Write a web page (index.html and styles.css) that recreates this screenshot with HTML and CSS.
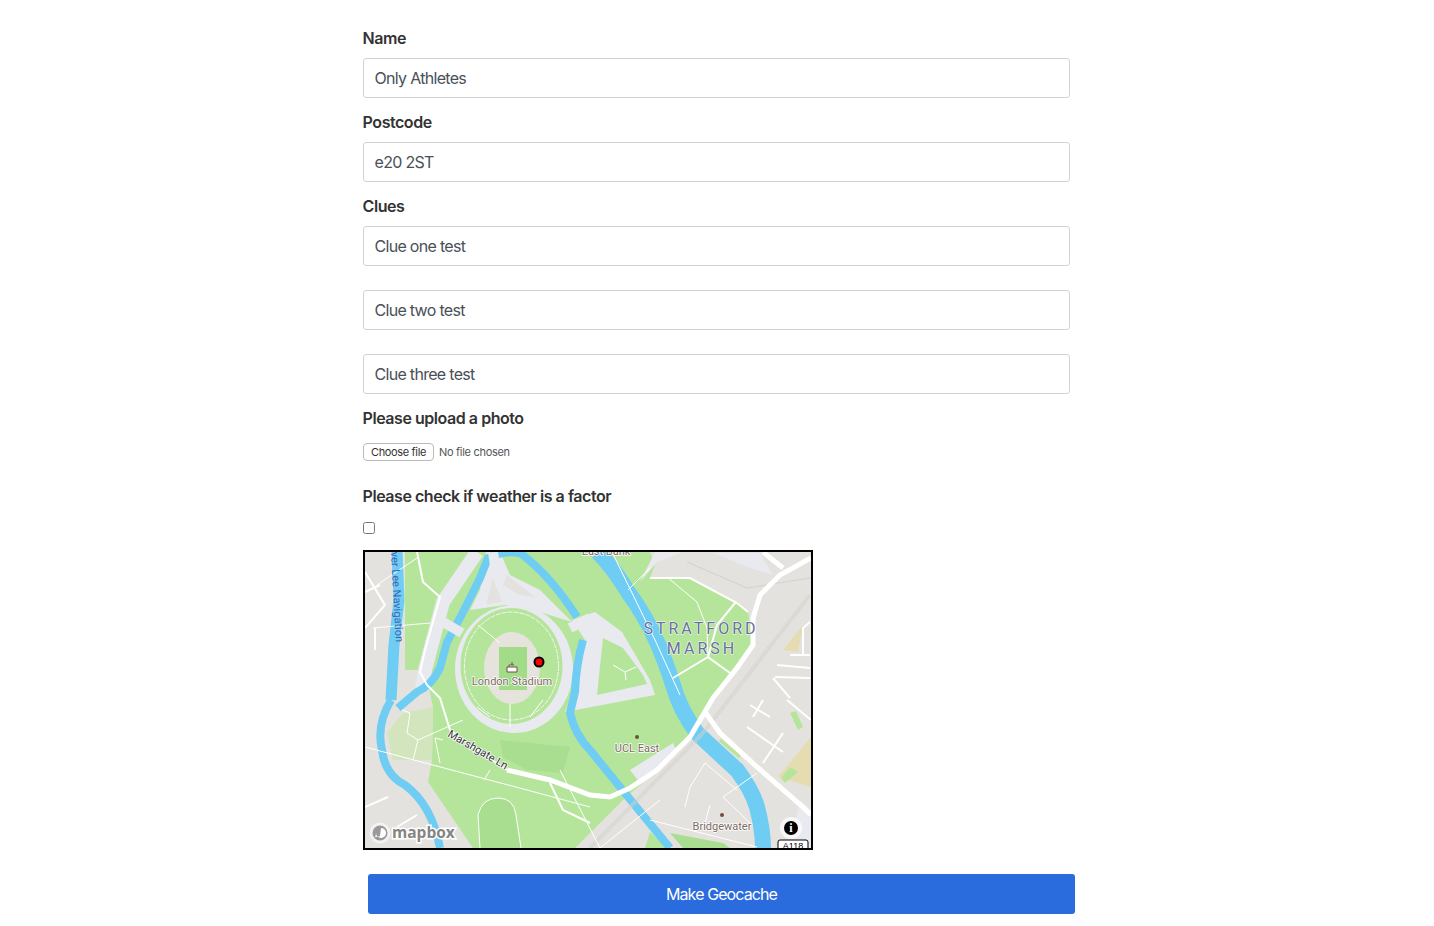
FILE: index.html
```html
<!DOCTYPE html>
<html lang="en">
<head>
  <meta charset="UTF-8">
  <title>Make Geocache</title>
  <link rel="stylesheet" href="styles.css">
</head>
<body>
  <form class="geocache-form">
    <div class="form-group">
      <label class="form-label">Name</label>
      <input class="form-input" type="text" value="Only Athletes">
    </div>
    <div class="form-group">
      <label class="form-label">Postcode</label>
      <input class="form-input" type="text" value="e20 2ST">
    </div>
    <div class="form-group clues">
      <label class="form-label">Clues</label>
      <input class="form-input" type="text" value="Clue one test">
      <input class="form-input" type="text" value="Clue two test">
      <input class="form-input" type="text" value="Clue three test">
    </div>
    <div class="form-group upload">
      <label class="form-label">Please upload a photo</label>
      <div class="file-row">
        <button class="file-btn" type="button">Choose file</button>
        <span class="file-name">No file chosen</span>
      </div>
    </div>
    <div class="form-group weather">
      <label class="form-label">Please check if weather is a factor</label>
      <input class="form-check" type="checkbox">
    </div>

    <div class="map">
      <svg class="map-svg" viewBox="365 552 446 296" width="446" height="296">
        <rect class="land" x="365" y="552" width="446" height="296"/>

        <!-- parks -->
        <polygon class="park" points="405,552 650,552 655,565 650,578 690,578 737,603 748,612 753,645 730,672 710,700 690,737 657,770 623,800 590,833 575,848 473,848 428,782 432,760 433,707 425,670 405,670"/>
        <polygon class="park-pale" points="387,733 403,713 433,707 432,760 393,760"/>
        <polygon class="park-dark" points="500,740 570,747 563,773 527,770 503,757"/>
        <path class="track" d="M480,848 L478,815 Q482,798 498,798 Q514,798 516,815 L521,848"/>
        <polygon class="park-dark" points="670,833 723,843 730,848 683,848"/>
        <polygon class="park" points="650,832 667,848 645,848"/>
        <polygon class="park" points="790,713 796,711 803,727 798,730"/>
        <polygon class="sand" points="803,625 783,650 798,652"/>
        <polygon class="sand" points="811,737 778,777 811,787"/>
        <polygon class="park" points="790,767 798,772 785,783 781,778"/>
        <path class="park-strip" d="M720,740 L740,757"/>

        <!-- plazas -->
        <polygon class="plaza" points="713,553 760,553 773,575 750,568"/>
        <polygon class="plaza" points="657,562 683,552 655,552 640,582"/>
        <polygon class="plaza" points="630,770 673,743 677,753 640,783"/>
        <polygon class="plaza" points="800,800 811,810 811,848 790,848"/>
        <ellipse class="plaza" cx="514" cy="669" rx="59" ry="64"/>
        <path class="plaza-road" d="M477,552 L443,602 L425,670 L422,690"/>
        <polygon class="plaza" points="486,552 500,552 510,575 540,590 572,622 540,612 505,605 470,610 480,590"/>
        <polygon class="land" points="493,578 502,602 486,604"/>
        <polygon class="land" points="507,575 535,597 520,595 503,585"/>
        <polygon class="plaza" points="572,620 595,612 622,632 650,680 655,695 565,712 578,680 585,640"/>
        <polygon class="park" points="603,638 623,648 643,675 647,684 597,695"/>

        <!-- stadium -->
        <ellipse class="park" cx="511.5" cy="666" rx="51" ry="58"/>
        <ellipse class="stadium-ring" cx="511.5" cy="666" rx="47" ry="54"/>
        <ellipse class="stadium-floor" cx="512" cy="668" rx="28" ry="36"/>
        <polygon class="pitch" points="499,647 527,647 527,690 499,690"/>
        <path class="road-thin" d="M478,625 L500,643 M477,707 L490,717 M510,704 L510,727 M543,700 L530,717"/>

        <!-- water -->
        <path class="water-lee" d="M397,552 L399,600 L394,645 L391,700"/>
        <path class="water" d="M391,700 Q376,725 382,750 Q385,775 405,785 Q432,805 440,848"/>
        <path class="water" d="M398,708 L417,692 Q432,685 440,668 L447,642 L460,618 L480,578 L488,558 Q505,550 520,553 Q550,575 577,617"/>
        <path class="water" d="M583,640 Q576,665 575,692 L570,713 Q575,735 590,750 L633,803 L670,848"/>
        <path class="water-main" d="M598,552 Q615,570 628,592 Q645,615 657,642 Q667,665 673,685 Q680,710 697,733 Q715,750 737,770 Q752,790 757,807 Q763,830 763,848"/>

        <!-- bridges -->
        <path class="bridge" d="M493,552 L496,572"/>
        <path class="bridge" d="M443,622 L462,633"/>
        <path class="bridge" d="M570,628 L590,618"/>

        <!-- rail -->
        <path class="rail" d="M590,848 L703,733 L810,595"/>
        <path class="rail-thin" d="M687,562 L747,588 L810,578"/>

        <!-- big roads -->
        <path class="road-wide" d="M811,558 L780,575 L760,595 L753,618 L753,645 L737,668 L713,698 L690,737 L657,770 L630,788 L610,797 L590,795 L550,780 L507,770"/>
        <path class="road-wide" d="M763,552 L783,568"/>
        <path class="road-wide" d="M705,712 L720,733 L757,767 L803,807 L811,815"/>
        <path class="road" d="M650,578 L690,578 L737,603 L748,612 M735,603 L717,625 L708,657 L730,673 M673,678 L708,657"/>
        <path class="road" d="M417,552 L423,582 L440,597 L425,650 L420,672 L427,685 L440,698 L450,730"/>
        <path class="road" d="M507,770 L480,752 L450,730"/>
        <path class="road" d="M550,783 L563,810 L590,823"/>
        <path class="road" d="M365,572 L385,605 L365,628 M365,592 L380,585 M375,628 L375,650"/>
        <path class="road" d="M747,727 L783,752 M783,733 L763,763 M753,717 L763,700 M750,705 L770,717 M787,700 L811,720"/>
        <path class="road" d="M810,622 L803,628 L803,655 M810,655 L790,655 M777,665 L810,668 M775,677 L810,678 M773,678 L790,698"/>
        <path class="road" d="M365,807 L388,797 M397,827 L417,815"/>
        <path class="road-thin" d="M373,628 L430,623 M377,585 L417,558"/>
        <path class="road-thin" d="M365,747 L527,790 L590,807"/>
        <path class="road-thin" d="M407,733 L410,713 L402,710 M407,733 L418,740 L413,760 M418,740 L463,720 M443,740 L435,738 L440,763 M490,770 L484,780"/>
        <path class="road-thin" d="M612,552 L655,640 L680,695 M628,590 L650,568 M613,665 L625,672 L636,667 M625,672 L626,680 M667,577 L697,602 L707,628 L708,657"/>
        <path class="road-thin" d="M685,807 L690,787 L705,763 L737,790 M723,797 L757,773 M723,797 L750,823 M710,805 L705,823"/>
        <path class="road-thin" d="M650,820 L757,847 M600,848 L660,800 M560,770 L600,848"/>

        <!-- labels -->
        <text class="map-water" transform="translate(391 552) rotate(87)">ver Lee Navigation</text>
        <text class="map-area" x="701" y="634">STRATFORD</text>
        <text class="map-area" x="702" y="654">MARSH</text>
        <text class="map-place" x="512" y="685">London Stadium</text>
        <text class="map-place" x="637" y="752">UCL East</text>
        <text class="map-place" x="722" y="830">Bridgewater</text>
        <text class="map-road" transform="translate(447 736) rotate(30)">Marshgate Ln</text>
        <text class="map-place" x="606" y="555">East Bank</text>
        <circle class="poi" cx="637" cy="737" r="2"/>
        <circle class="poi" cx="722" cy="815" r="2"/>
        <path class="stadium-icon" d="M507,667 h10 v5 h-10 z M509,667 v-2 h5 M512,665 v-3"/>

        <!-- marker -->
        <circle class="marker" cx="539" cy="662" r="4.5"/>

        <!-- mapbox logo -->
        <circle class="logo-ring" cx="380" cy="833" r="9"/>
        <path class="logo-pin" d="M381,828 a5,5 0 1 1 -5,5 q0,2.5 -1,4 q3,0 5,-1 z"/>
        <text class="logo-text" x="392" y="838">mapbox</text>

        <!-- info -->
        <circle class="info-halo" cx="791" cy="828" r="11"/>
        <circle class="info-dot" cx="791" cy="828" r="7"/>
        <text class="info-i" x="791" y="832">i</text>

        <!-- road shield -->
        <rect class="shield" x="778" y="840" width="30" height="14" rx="2"/>
        <text class="shield-text" x="793" y="849">A118</text>
      </svg>
    </div>

    <button class="submit-btn" type="button">Make Geocache</button>
  </form>
</body>
</html>
```

FILE: styles.css
```css
* {
  box-sizing: border-box;
}

body {
  margin: 0;
  background-color: #fff;
  color: #333;
  font-family: Inter, "Liberation Sans", Arial, sans-serif;
  font-size: 16px;
  line-height: 24px;
}

.geocache-form {
  width: 707px;
  margin-left: 363px;
  padding-top: 26px;
}

.form-group {
  margin-bottom: 12px;
}

.form-label {
  display: block;
  margin-bottom: 8px;
  margin-left: -0.4px;
  font-weight: 600;
  letter-spacing: -0.46px;
}

.form-input {
  display: block;
  width: 100%;
  height: 40px;
  padding: 0 10.5px;
  border: 1px solid #ced4da;
  border-radius: 3px;
  background: #fff;
  color: #495057;
  font: inherit;
  letter-spacing: -0.7px;
}

.clues .form-input + .form-input {
  margin-top: 24px;
}

.upload {
  margin-bottom: 23px;
}

.file-row {
  display: flex;
  align-items: center;
  height: 18px;
  margin-top: 13px;
  font-size: 11px;
}

.file-btn {
  height: 18px;
  padding: 0 7px;
  border: 1px solid #bbb;
  border-radius: 4px;
  background: #fff;
  color: #333;
  font: inherit;
  line-height: 16px;
  letter-spacing: -0.35px;
}

.file-name {
  margin-left: 5px;
  color: #555;
  letter-spacing: -0.3px;
}

.weather {
  margin-bottom: 16px;
}

.form-check {
  display: block;
  width: 12px;
  height: 12px;
  margin: 14px 0 0;
}

.map {
  width: 450px;
  height: 300px;
  border: 2px solid #000;
  overflow: hidden;
}

.map-svg {
  display: block;
}

.land { fill: #e4e2de; }
.park { fill: #b5e59b; }
.park-pale { fill: #d2e5bd; }
.park-dark { fill: #a9de91; }
.pitch { fill: #a3dc88; }
.sand { fill: #e6dcb2; }
.plaza { fill: #e9e9f0; }
.stadium-floor { fill: #e6e3dc; }

.plaza-road {
  fill: none;
  stroke: #e9e9f0;
  stroke-width: 14;
}

.park-strip {
  fill: none;
  stroke: #b5e59b;
  stroke-width: 3;
}

.track {
  fill: #a9de91;
  stroke: #fff;
  stroke-width: 1;
}

.stadium-ring {
  fill: none;
  stroke: #f4f5f0;
  stroke-width: 1;
  stroke-dasharray: 5 1;
}

.road-thin {
  fill: none;
  stroke: #fff;
  stroke-width: 1;
}

.water,
.water-lee,
.water-main {
  fill: none;
  stroke: #6fcdf3;
}

.water { stroke-width: 8; }
.water-lee { stroke-width: 11; }
.water-main { stroke-width: 16; }

.bridge {
  fill: none;
  stroke: #e9e9f0;
  stroke-width: 10;
}

.road-wide {
  fill: none;
  stroke: #fff;
  stroke-width: 5;
}

.road {
  fill: none;
  stroke: #fff;
  stroke-width: 2;
}

.rail {
  fill: none;
  stroke: #d3d1cc;
  stroke-width: 4;
  stroke-dasharray: 1 1;
}

.rail-thin {
  fill: none;
  stroke: #d3d1cc;
  stroke-width: 1;
}

.map-water,
.map-area,
.map-place,
.map-road {
  font-family: Roboto, sans-serif;
  paint-order: stroke;
  stroke-linejoin: round;
}

.map-water {
  fill: #3f66b5;
  font-size: 11px;
}

.map-area {
  fill: #66709c;
  stroke: #fff;
  stroke-width: 1px;
  font-size: 16px;
  letter-spacing: 3px;
  text-anchor: middle;
}

.map-place {
  fill: #7c6a62;
  stroke: #fff;
  stroke-width: 1.5px;
  font-size: 11px;
  text-anchor: middle;
}

.map-road {
  fill: #333;
  stroke: #fff;
  stroke-width: 1.5px;
  font-size: 11px;
}

.poi { fill: #6f4f3f; }

.stadium-icon {
  fill: #fff;
  stroke: #6f4f3f;
  stroke-width: 1;
}

.marker {
  fill: #f00;
  stroke: #000;
  stroke-width: 2;
}

.logo-ring {
  fill: #999;
  stroke: #f2f2f2;
  stroke-width: 3;
}

.logo-pin { fill: #fff; }

.logo-text {
  fill: #858585;
  stroke: #fff;
  stroke-width: 3px;
  paint-order: stroke;
  font-family: "Open Sans", sans-serif;
  font-size: 15.5px;
  font-weight: 700;
}

.info-halo { fill: rgba(255, 255, 255, 0.7); }
.info-dot { fill: #000; }

.info-i {
  fill: #fff;
  font-family: "Liberation Serif", serif;
  font-size: 12px;
  font-weight: 700;
  text-anchor: middle;
}

.shield {
  fill: #fff;
  stroke: #000;
  stroke-width: 1;
}

.shield-text {
  fill: #000;
  font-family: "Liberation Sans", sans-serif;
  font-size: 9px;
  text-anchor: middle;
}

.submit-btn {
  display: block;
  width: 707px;
  height: 40px;
  margin: 24px 0 12px 5px;
  border: 0;
  border-radius: 3px;
  background-color: #2a6bdd;
  color: #fff;
  font: inherit;
  letter-spacing: -0.9px;
}
```
